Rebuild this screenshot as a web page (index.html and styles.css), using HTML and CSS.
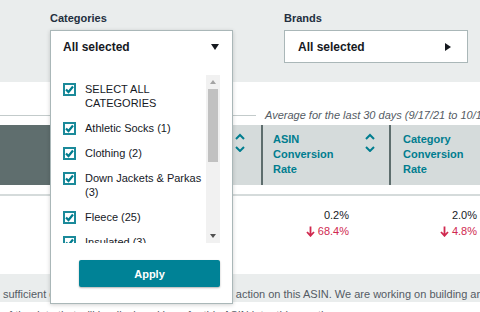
FILE: index.html
```html
<!DOCTYPE html>
<html lang="en">
<head>
  <meta charset="UTF-8">
  <title>Category conversion</title>
  <meta name="viewport" content="width=device-width, initial-scale=1">
  <link rel="stylesheet" href="styles.css">
</head>
<body>
  <div class="filters">
    <div class="filter filter-categories">
      <div class="filter-label">Categories</div>
      <div class="select"><span>All selected</span><span class="caret-down"></span></div>

      <!-- open dropdown, sits over the report -->
      <div class="dropdown">
        <div class="dropdown-head"><span>All selected</span><span class="caret-down"></span></div>
        <div class="options">
          <ul class="option-list">
            <li class="option"><span class="check"><svg viewBox="0 0 9 9" width="9" height="9"><polyline points="1,4.5 3.5,7 8,1.5"/></svg></span><span>SELECT ALL CATEGORIES</span></li>
            <li class="option"><span class="check"><svg viewBox="0 0 9 9" width="9" height="9"><polyline points="1,4.5 3.5,7 8,1.5"/></svg></span><span>Athletic Socks (1)</span></li>
            <li class="option"><span class="check"><svg viewBox="0 0 9 9" width="9" height="9"><polyline points="1,4.5 3.5,7 8,1.5"/></svg></span><span>Clothing (2)</span></li>
            <li class="option"><span class="check"><svg viewBox="0 0 9 9" width="9" height="9"><polyline points="1,4.5 3.5,7 8,1.5"/></svg></span><span>Down Jackets &amp; Parkas (3)</span></li>
            <li class="option"><span class="check"><svg viewBox="0 0 9 9" width="9" height="9"><polyline points="1,4.5 3.5,7 8,1.5"/></svg></span><span>Fleece (25)</span></li>
            <li class="option"><span class="check"><svg viewBox="0 0 9 9" width="9" height="9"><polyline points="1,4.5 3.5,7 8,1.5"/></svg></span><span>Insulated (3)</span></li>
            <li class="option"><span class="check"><svg viewBox="0 0 9 9" width="9" height="9"><polyline points="1,4.5 3.5,7 8,1.5"/></svg></span><span>Rain Jackets (4)</span></li>
          </ul>
          <div class="scrollbar">
            <span class="scroll-btn"><span class="arrow-up"></span></span>
            <span class="scroll-thumb"></span>
            <span class="scroll-space"></span>
            <span class="scroll-btn"><span class="arrow-down"></span></span>
          </div>
        </div>
        <div class="dropdown-foot"><button class="apply">Apply</button></div>
      </div>
    </div>

    <div class="filter filter-brands">
      <div class="filter-label">Brands</div>
      <div class="select"><span>All selected</span><span class="caret-right"></span></div>
    </div>
  </div>

  <div class="report">
    <div class="caption">
      <span class="caption-line"></span>
      <span class="caption-text">Average for the last 30 days (9/17/21 to 10/16/21)</span>
    </div>

    <div class="grid grid-head">
      <div class="head-cell head-dark"></div>
      <div class="head-cell head-b">
        <span class="head-title"></span>
        <svg class="sort" viewBox="0 0 10 19" width="10" height="19"><polyline points="1,6 5,2 9,6"/><polyline points="1,14 5,18 9,14"/></svg>
      </div>
      <div class="head-cell head-c">
        <span class="head-title">ASIN Conversion Rate</span>
        <svg class="sort" viewBox="0 0 10 19" width="10" height="19"><polyline points="1,6 5,2 9,6"/><polyline points="1,14 5,18 9,14"/></svg>
      </div>
      <div class="head-cell head-d">
        <span class="head-title">Category Conversion Rate</span>
        <svg class="sort" viewBox="0 0 10 19" width="10" height="19"><polyline points="1,6 5,2 9,6"/><polyline points="1,14 5,18 9,14"/></svg>
      </div>
    </div>

    <div class="grid grid-row">
      <div class="cell"></div>
      <div class="cell"></div>
      <div class="cell cell-num">
        <div>0.2%</div>
        <div class="delta"><svg viewBox="0 0 9 11" width="9" height="11"><path d="M4.5 0.5V9.5M1 6l3.5 3.8L8 6"/></svg>68.4%</div>
      </div>
      <div class="cell cell-num">
        <div>2.0%</div>
        <div class="delta"><svg viewBox="0 0 9 11" width="9" height="11"><path d="M4.5 0.5V9.5M1 6l3.5 3.8L8 6"/></svg>4.8%</div>
      </div>
    </div>
  </div>

  <div class="notice">sufficient data available to us to recommend an action on this ASIN. We are working on building an</div>
  <div class="notice-more">of the data that will be displayed here for this ASIN later this month.</div>
</body>
</html>
```

FILE: styles.css
```css
/* Reset */
* { box-sizing: border-box; }
html, body { margin: 0; padding: 0; }

body {
  width: 480px;
  height: 312px;
  overflow: hidden;
  font-family: 'Liberation Sans', Arial, sans-serif;
  font-size: 11px;
  color: #16191f;
  background: #fff;
}

/* Filter bar */
.filters {
  display: flex;
  gap: 51px;
  height: 82px;
  padding: 11px 0 0 50px;
  background: #eaeded;
}

.filter { position: relative; }
.filter-categories { width: 183px; }
.filter-brands { width: 184px; }

.filter-label {
  font-weight: bold;
  line-height: 14px;
  margin-bottom: 5px;
  color: #232f3e;
}

.select {
  display: flex;
  align-items: center;
  justify-content: space-between;
  height: 33px;
  padding: 0 14px 0 13px;
  background: #fff;
  border: 1px solid #aab7b8;
  font-size: 12px;
  font-weight: bold;
}

.filter-brands .select { padding-right: 16px; }

.caret-down {
  width: 0; height: 0;
  border-left: 4px solid transparent;
  border-right: 4px solid transparent;
  border-top: 6px solid #16191f;
}

.caret-right {
  width: 0; height: 0;
  border-top: 4px solid transparent;
  border-bottom: 4px solid transparent;
  border-left: 6px solid #16191f;
}

/* Open dropdown */
.dropdown {
  position: absolute;
  top: 19px;
  left: 0;
  width: 183px;
  height: 274px;
  background: #fff;
  border: 1px solid #aab7b8;
  box-shadow: 0 1px 4px rgba(0,0,0,0.18);
  z-index: 5;
}

.dropdown-head {
  display: flex;
  align-items: center;
  justify-content: space-between;
  height: 32px;
  padding: 0 13px 0 12px;
  font-size: 12px;
  font-weight: bold;
}

.options {
  display: flex;
  height: 168px;
  margin-top: 12px;
  padding: 0 12px;
}

.option-list {
  flex: 1;
  overflow: hidden;
  list-style: none;
  margin: 0;
  padding: 7px 0 0;
}

.option {
  display: flex;
  gap: 9px;
  line-height: 14px;
  margin-bottom: 11px;
  padding-right: 4px;
}

.check {
  flex: 0 0 13px;
  width: 13px;
  height: 13px;
  margin-top: 1px;
  border: 2px solid #1b8a9a;
  display: flex;
  align-items: center;
  justify-content: center;
}

.check polyline {
  fill: none;
  stroke: #007d8f;
  stroke-width: 2.2;
}

.scrollbar {
  display: flex;
  flex-direction: column;
  width: 14px;
  background: #f1f1f1;
}

.scroll-btn {
  height: 14px;
  display: flex;
  align-items: center;
  justify-content: center;
}

.arrow-up {
  border-left: 3.5px solid transparent;
  border-right: 3.5px solid transparent;
  border-bottom: 4px solid #a3a3a3;
}

.arrow-down {
  border-left: 3.5px solid transparent;
  border-right: 3.5px solid transparent;
  border-top: 4px solid #505050;
}

.scroll-thumb {
  height: 73px;
  margin: 0 2px;
  background: #c1c1c1;
}

.scroll-space { flex: 1; }

.dropdown-foot {
  margin-top: 17px;
  padding: 0 0 16px 28px;
}

.apply {
  width: 141px;
  height: 27px;
  border: none;
  border-radius: 2px;
  background: #008296;
  color: #fff;
  font-family: inherit;
  font-size: 11px;
  font-weight: bold;
  box-shadow: 0 1px 2px rgba(0,0,0,0.3);
}

/* Report table */
.report { width: 560px; }

.caption {
  display: flex;
  align-items: center;
  gap: 9px;
  margin-top: 26px;
  line-height: 14px;
  white-space: nowrap;
}

.caption-line {
  flex: 0 0 256px;
  height: 1px;
  background: #c3cbcb;
}

.caption-text {
  font-style: italic;
  color: #545b64;
}

.grid {
  display: grid;
  grid-template-columns: 150px 111px 128px 128px;
}

.grid-head {
  height: 60px;
  margin-top: 3px;
}

.head-cell {
  display: flex;
  justify-content: space-between;
  align-items: flex-start;
  padding: 7px 14px 0 10px;
  background: #d5dbdb;
  color: #007d8f;
  font-weight: bold;
  line-height: 15px;
}

.head-dark { background: #5f6e6e; }
.head-b { padding-right: 16px; }
.head-c { border-left: 2px solid #5d6d6d; }
.head-d { border-left: 2px solid #5d6d6d; padding-left: 12px; }

.head-title { max-width: 70px; }

.sort {
  margin-top: 1px;
  fill: none;
  stroke: #007d8f;
  stroke-width: 2;
}

.grid-row {
  height: 80px;
  margin-top: 9px;
  border-top: 2px solid #d5dbdb;
}

.cell { padding-top: 11px; }

.cell-num {
  padding-right: 40px;
  text-align: right;
  line-height: 16px;
}

.delta {
  display: flex;
  justify-content: flex-end;
  align-items: center;
  gap: 3px;
  color: #d0294f;
}

.delta path {
  fill: none;
  stroke: #d0294f;
  stroke-width: 1.8;
}

/* Notice under the table */
.notice {
  height: 28px;
  padding: 13px 0 0 3px;
  background: #eaeded;
  color: #545b64;
  line-height: 14px;
  white-space: nowrap;
}

.notice-more {
  margin-top: 6px;
  padding-left: 3px;
  color: #545b64;
  line-height: 14px;
  white-space: nowrap;
}
```
